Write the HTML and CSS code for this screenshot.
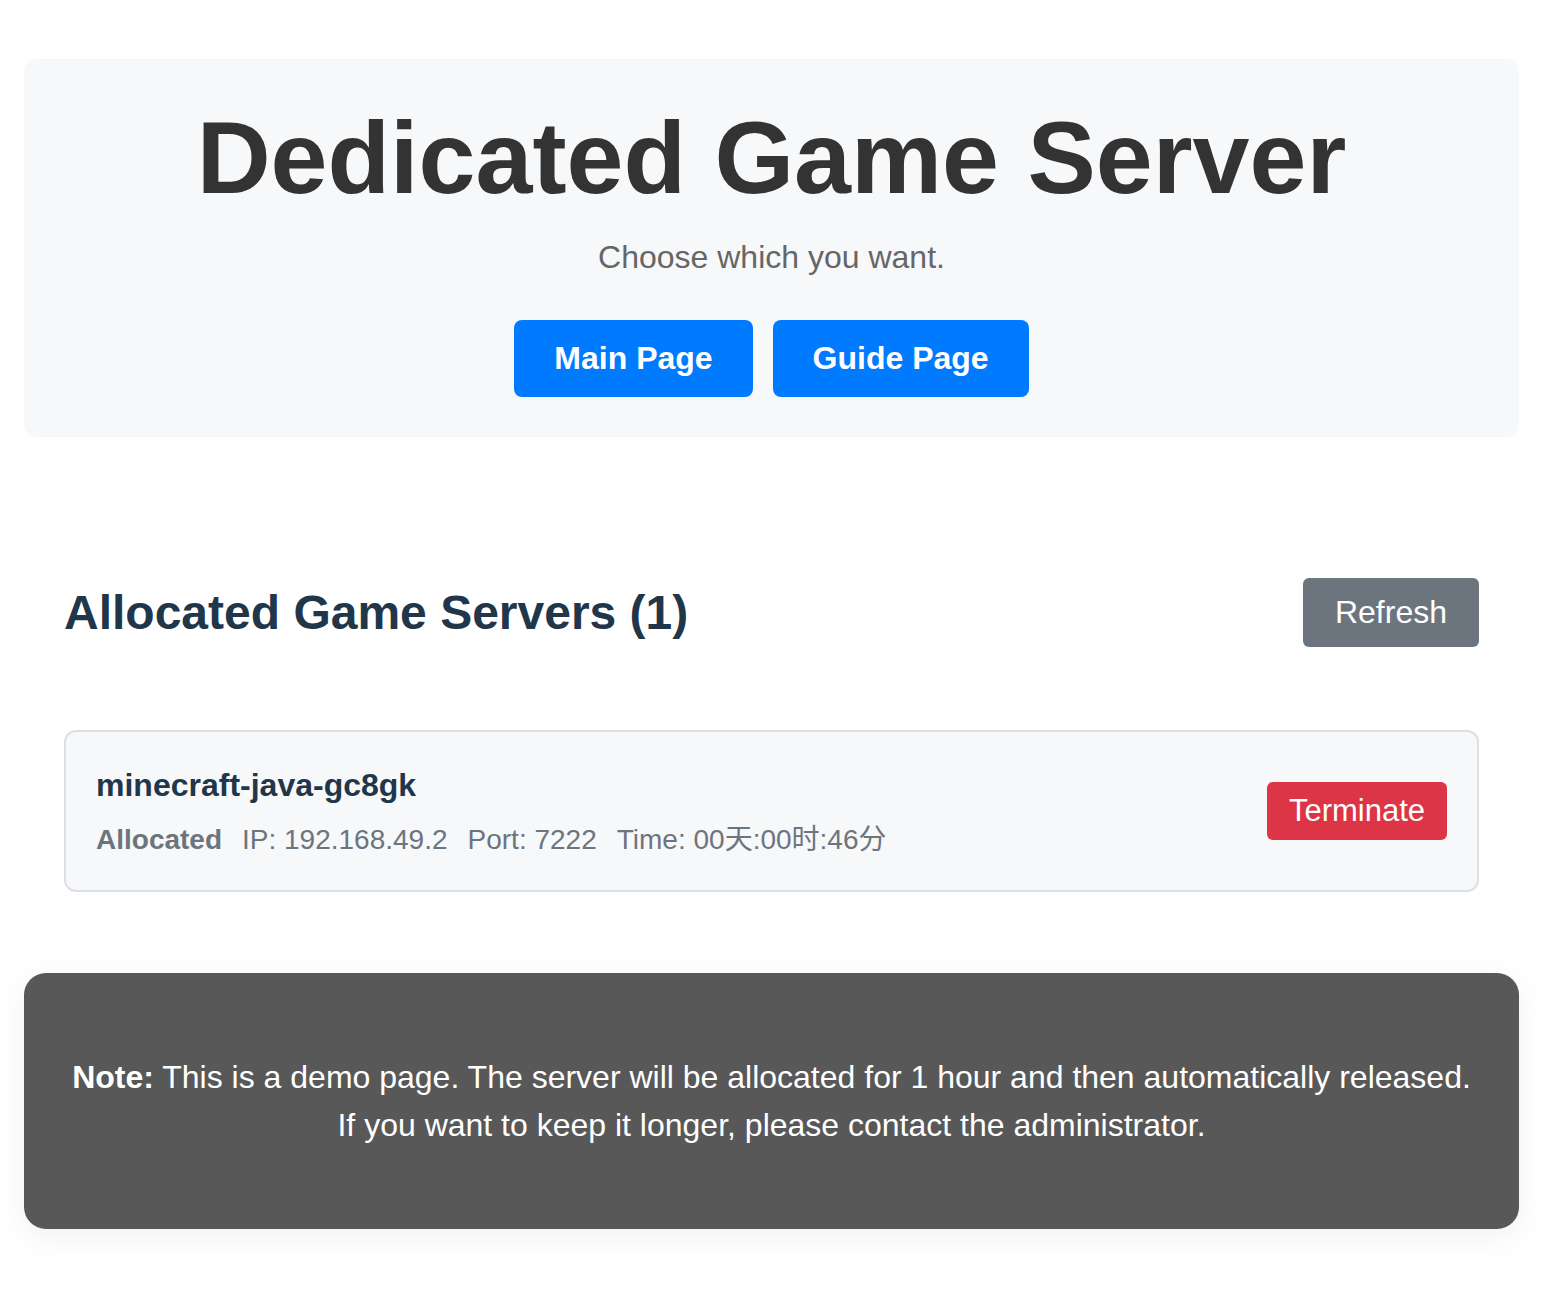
FILE: index.html
```html
<!DOCTYPE html>
<html lang="en">
<head>
<meta charset="utf-8">
<title>Dedicated Game Server</title>
<link rel="stylesheet" href="styles.css">
</head>
<body>
<div class="page">
  <header class="hero">
    <h1 class="hero-title">Dedicated Game Server</h1>
    <p class="hero-sub">Choose which you want.</p>
    <div class="hero-actions">
      <a class="btn btn-primary" href="#">Main Page</a>
      <a class="btn btn-primary" href="#">Guide Page</a>
    </div>
  </header>

  <section class="servers">
    <div class="servers-head">
      <h2 class="servers-title">Allocated Game Servers (1)</h2>
      <button class="btn-refresh" type="button">Refresh</button>
    </div>
    <div class="server-card">
      <div class="server-info">
        <div class="server-name">minecraft-java-gc8gk</div>
        <div class="server-meta">
          <span class="status">Allocated</span>
          <span>IP: 192.168.49.2</span>
          <span>Port: 7222</span>
          <span>Time: 00天:00时:46分</span>
        </div>
      </div>
      <button class="btn-terminate" type="button">Terminate</button>
    </div>
  </section>

  <div class="note">
    <p><strong>Note:</strong> This is a demo page. The server will be allocated for 1 hour and then automatically released.<br>If you want to keep it longer, please contact the administrator.</p>
  </div>
</div>
</body>
</html>
```

FILE: styles.css
```css
* { box-sizing: border-box; }
html, body { margin: 0; padding: 0; background: #fff; }
body {
  font-family: "Liberation Sans", Arial, "Noto Sans CJK SC", sans-serif;
  color: #333;
}
.page {
  padding: 59px 39px 60px 24px;
}
.hero {
  background: #f7f8fa;
  border-radius: 12px;
  padding: 40px 20px 40px;
  text-align: center;
}
.hero-title {
  margin: 0;
  font-size: 102.4px;
  font-weight: 700;
  line-height: 1.15;
  color: #333;
}
.hero-sub {
  margin: 22px 0 0;
  font-size: 32px;
  color: #666;
}
.hero-actions {
  margin-top: 44px;
  display: flex;
  justify-content: center;
  gap: 20px;
}
.btn {
  display: inline-block;
  text-decoration: none;
  font-weight: 700;
  font-size: 32px;
  line-height: 37px;
  padding: 20px 40px;
  border-radius: 8px;
}
.btn-primary {
  background: #007bff;
  color: #fff;
}
.servers {
  padding: 141px 40px 0;
}
.servers-head {
  display: flex;
  align-items: center;
  justify-content: space-between;
}
.servers-title {
  margin: 0;
  font-size: 48px;
  font-weight: 700;
  color: #22364a;
}
.btn-refresh {
  font-family: inherit;
  font-size: 32px;
  line-height: 37px;
  padding: 16px 32px;
  border: 0;
  border-radius: 6px;
  background: #6c757d;
  color: #fff;
}
.server-card {
  margin-top: 83px;
  background: #f7f8fa;
  border: 2px solid #dcdfe3;
  border-radius: 12px;
  padding: 33px 30px 32px 30px;
  display: flex;
  align-items: center;
  justify-content: space-between;
}
.server-name {
  font-size: 32px;
  font-weight: 700;
  color: #22364a;
  line-height: 40px;
}
.server-meta {
  margin-top: 17px;
  display: flex;
  gap: 20px;
  font-size: 28px;
  line-height: 36px;
  color: #6c757d;
}
.status {
  font-weight: 700;
}
.btn-terminate {
  font-family: inherit;
  font-size: 31px;
  line-height: 36px;
  padding: 11px 22px;
  border: 0;
  border-radius: 6px;
  background: #dc3545;
  color: #fff;
}
.note {
  margin-top: 81px;
  background: #585858;
  border-radius: 22px;
  box-shadow: 0 8px 32px rgba(0, 0, 0, 0.06);
  padding: 80px 20px;
  text-align: center;
  color: #fff;
}
.note p {
  margin: 0;
  font-size: 32px;
  line-height: 48px;
}
```
